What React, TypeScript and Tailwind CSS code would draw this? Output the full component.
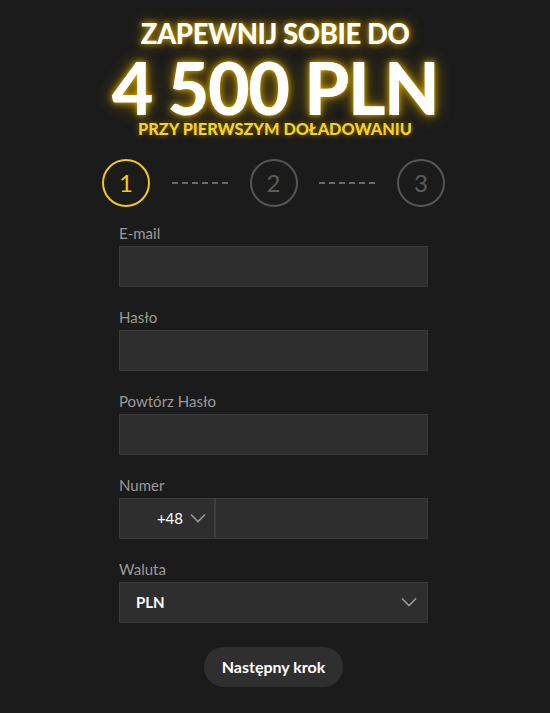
const fields = ["E-mail", "Hasło", "Powtórz Hasło"];

function Chevron({ className }: { className?: string }) {
  return (
    <svg width="16" height="10" viewBox="0 0 16 10" fill="none" className={className}>
      <polyline points="1,1.5 8,8.5 15,1.5" stroke="currentColor" strokeWidth="1.6" />
    </svg>
  );
}

function Dashes() {
  return (
    <div className="flex gap-[4px]">
      {Array.from({ length: 6 }).map((_, i) => (
        <span key={i} className="h-[2px] w-[6px] bg-[#6a6a6a]" />
      ))}
    </div>
  );
}

function Step({ n, active }: { n: number; active?: boolean }) {
  return (
    <div
      className={
        active
          ? "flex h-[48px] w-[48px] items-center justify-center rounded-full border-2 border-[#f2c81d] text-[24px] text-[#f2c81d]"
          : "flex h-[48px] w-[48px] items-center justify-center rounded-full border-2 border-[#555] text-[24px] text-[#5c5c5c]"
      }
    >
      {n}
    </div>
  );
}

export default function App() {
  return (
    <div className="min-h-[713px] bg-[#1b1b1b] pb-[26px] font-['Lato','Liberation_Sans',sans-serif] text-white">
      {/* Header */}
      <div className="flex flex-col items-center pt-[20px] text-center">
        <h2 className="text-[27.5px] font-black leading-none tracking-[-0.015em] [text-shadow:0_0_6px_#d8a800,0_0_14px_#8a6a00]">
          ZAPEWNIJ SOBIE DO
        </h2>
        <div className="mt-[3px] text-[72px] font-black leading-none tracking-[-0.02em] [text-shadow:0_0_6px_#e0b000,0_0_16px_#9a7500]">
          4 500 PLN
        </div>
        <p className="-mt-[2px] text-[16.3px] font-black leading-none text-[#f5d31a] [text-shadow:0_0_6px_#8a6a00]">
          PRZY PIERWSZYM DOŁADOWANIU
        </p>
      </div>

      {/* Steps */}
      <div className="ml-[102px] mt-[22px] flex w-[343px] items-center justify-between">
        <Step n={1} active />
        <Dashes />
        <Step n={2} />
        <Dashes />
        <Step n={3} />
      </div>

      {/* Form */}
      <form className="ml-[119px] mt-[17px] w-[309px]">
        {fields.map((f) => (
          <div key={f} className="mb-[21px]">
            <label className="block text-[15px] leading-[18px] text-[#9a9a9a]">{f}</label>
            <div className="mt-[4px] h-[41px] border border-[#3a3a3a] bg-[#2e2e2e]" />
          </div>
        ))}

        <div className="mb-[21px]">
          <label className="block text-[15px] leading-[18px] text-[#9a9a9a]">Numer</label>
          <div className="mt-[4px] flex h-[41px] border border-[#3a3a3a] bg-[#2e2e2e]">
            <div className="flex w-[96px] items-center justify-end gap-[8px] border-r-2 border-[#3e3e3e] pr-[8px] text-[15px] text-white">
              <span className="-mr-[1px] pl-[2px]">+48</span>
              <Chevron className="text-[#9a9a9a]" />
            </div>
            <div className="flex-1" />
          </div>
        </div>

        <div>
          <label className="block text-[15px] leading-[18px] text-[#9a9a9a]">Waluta</label>
          <div className="mt-[4px] flex h-[41px] items-center justify-between border border-[#3a3a3a] bg-[#2e2e2e] pl-[16px] pr-[10px]">
            <span className="text-[15px] font-bold">PLN</span>
            <Chevron className="text-[#9a9a9a]" />
          </div>
        </div>

        <div className="mt-[24px] flex justify-center">
          <button
            type="button"
            className="h-[40px] w-[139px] rounded-full bg-[#2f2f2f] text-[16px] font-bold text-white"
          >
            Następny krok
          </button>
        </div>
      </form>
    </div>
  );
}
